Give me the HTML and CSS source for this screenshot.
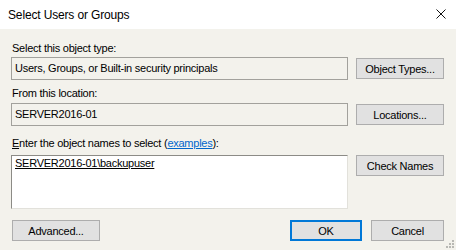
FILE: index.html
```html
<!DOCTYPE html>
<html>
<head>
<meta charset="utf-8">
<link rel="stylesheet" href="styles.css">
</head>
<body>
<div class="dialog">
  <div class="titlebar">
    <span class="title">Select Users or Groups</span>
    <svg class="close" width="10" height="10" viewBox="0 0 10 10"><path d="M0.5 0.5L9.5 9.5M9.5 0.5L0.5 9.5" stroke="#111" stroke-width="1" fill="none"/></svg>
  </div>
  <div class="content">
    <div class="label l1">Select this object type:</div>
    <div class="row">
      <div class="field">Users, Groups, or Built-in security principals</div>
      <div class="btn">Object Types...</div>
    </div>
    <div class="label l2">From this location:</div>
    <div class="row">
      <div class="field">SERVER2016-01</div>
      <div class="btn">Locations...</div>
    </div>
    <div class="label l3"><u>E</u>nter the object names to select (<span class="link">examples</span>):</div>
    <div class="row top">
      <div class="area"><u>SERVER2016-01\backupuser</u></div>
      <div class="btn">Check Names</div>
    </div>
    <div class="footer">
      <div class="btn adv">Advanced...</div>
      <div class="actions">
        <div class="btn ok">OK</div>
        <div class="btn cancel">Cancel</div>
      </div>
    </div>
  </div>
  <svg class="grip" width="10" height="10" viewBox="0 0 10 10">
    <g fill="#b8b8b4">
      <rect x="7" y="1" width="2" height="2"/>
      <rect x="4" y="4" width="2" height="2"/><rect x="7" y="4" width="2" height="2"/>
      <rect x="1" y="7" width="2" height="2"/><rect x="4" y="7" width="2" height="2"/><rect x="7" y="7" width="2" height="2"/>
    </g>
  </svg>
</div>
</body>
</html>
```
FILE: styles.css
```css
html, body {
  margin: 0;
  padding: 0;
}
body {
  width: 456px;
  height: 250px;
  overflow: hidden;
  background: #f3f2ec;
  font-family: "Liberation Sans", Arial, sans-serif;
  font-size: 11px;
  color: #000;
}
.dialog {
  position: relative;
  width: 456px;
  height: 250px;
}
.titlebar {
  height: 29px;
  background: #fff;
  display: flex;
  align-items: center;
  justify-content: space-between;
  padding: 0 10px 0 8px;
}
.title {
  font-family: "Liberation Sans", Arial, sans-serif;
  font-size: 12px;
  letter-spacing: -0.15px;
  color: #000;
  margin-top: 1px;
}
.close {
  display: block;
  margin-top: -1px;
}
.content {
  padding: 0 12px 0 11px;
  letter-spacing: -0.25px;
}
.label {
  height: 13px;
  line-height: 13px;
  padding-left: 1px;
}
.l1 { margin-top: 13px; margin-bottom: 2px; }
.l2 { margin-top: 7px; margin-bottom: 3px; }
.l3 { margin-top: 11px; margin-bottom: 5px; }
.row {
  display: flex;
  align-items: center;
  gap: 8px;
}
.row.top {
  align-items: flex-start;
}
.field {
  flex: 1;
  height: 23px;
  box-sizing: border-box;
  border: 1px solid #a2a19c;
  background: #f3f2ec;
  line-height: 21px;
  padding-left: 3px;
  white-space: nowrap;
}
.area {
  flex: 1;
  height: 54px;
  box-sizing: border-box;
  background: #fff;
  border: 1px solid #e2e1db;
  border-top-color: #8c8b86;
  border-left-color: #8c8b86;
  padding: 1px 3px;
  line-height: 13px;
}
.btn {
  width: 88px;
  height: 21px;
  box-sizing: border-box;
  background: #e1e1e1;
  border: 1px solid #adadad;
  display: flex;
  align-items: center;
  justify-content: center;
  flex: none;
}
.link {
  color: #0066cc;
  text-decoration: underline;
}
.footer {
  display: flex;
  justify-content: space-between;
  margin-top: 11px;
}
.adv {
  margin-left: 1px;
}
.actions {
  display: flex;
  gap: 9px;
}
.ok {
  width: 72px;
  border: 2px solid #0078d7;
}
.cancel {
  width: 73px;
}
.grip {
  position: absolute;
  right: 1px;
  bottom: 1px;
}
```
